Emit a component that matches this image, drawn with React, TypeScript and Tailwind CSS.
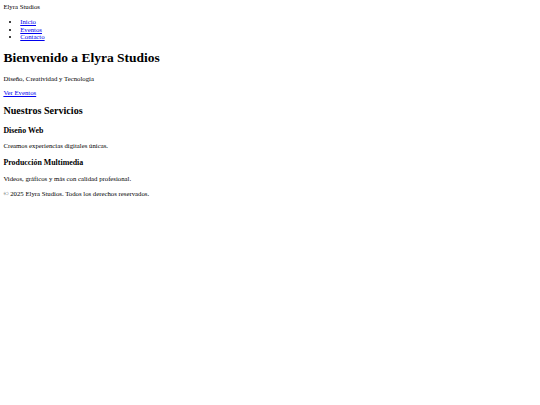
export default function App() {
    return (
        <div className="min-h-screen bg-white p-[3.375px] font-['Liberation_Serif','Times_New_Roman',serif] text-[6.75px] leading-[7.76px] text-black">
            <header>
                <div>Elyra Studios</div>
                <nav>
                    <ul className="my-[6.75px] list-disc pl-[16.875px]">
                        <li><a href="#" className="text-[#0000ee] underline">Inicio</a></li>
                        <li><a href="#" className="text-[#0000ee] underline">Eventos</a></li>
                        <li><a href="#" className="text-[#0000ee] underline">Contacto</a></li>
                    </ul>
                </nav>
            </header>

            <section>
                <h1 className="my-[9.05px] text-[13.5px] leading-[15.52px] font-bold">Bienvenido a Elyra Studios</h1>
                <p className="my-[6.75px]">Diseño, Creatividad y Tecnología</p>
                <p className="my-[6.75px]">
                    <a href="#" className="text-[#0000ee] underline">Ver Eventos</a>
                </p>
            </section>

            <section>
                <h2 className="my-[8.4px] text-[10.125px] leading-[11.64px] font-bold">Nuestros Servicios</h2>
                <div>
                    <h3 className="my-[7.9px] text-[7.9px] leading-[9.08px] font-bold">Diseño Web</h3>
                    <p className="my-[6.75px]">Creamos experiencias digitales únicas.</p>
                </div>
                <div>
                    <h3 className="my-[7.9px] text-[7.9px] leading-[9.08px] font-bold">Producción Multimedia</h3>
                    <p className="my-[6.75px]">Videos, gráficos y más con calidad profesional.</p>
                </div>
            </section>

            <footer>
                <p className="my-[6.75px]">© 2025 Elyra Studios. Todos los derechos reservados.</p>
            </footer>
        </div>
    )
}
